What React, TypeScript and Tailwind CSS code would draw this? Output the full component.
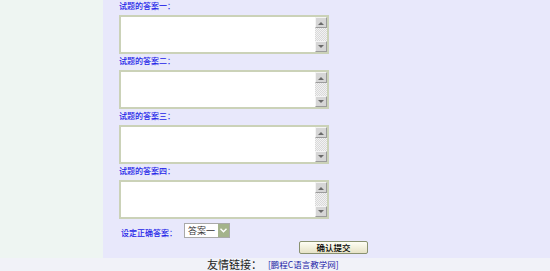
const answers = ["试题的答案一：", "试题的答案二：", "试题的答案三：", "试题的答案四："];

function ScrollButton({ dir }: { dir: "up" | "down" }) {
  return (
    <div className="h-[11px] w-[12px] flex items-center justify-center bg-[#d6d6d6] border border-t-[#f4f4f4] border-l-[#f4f4f4] border-r-[#9c9c9c] border-b-[#9c9c9c]">
      <svg width="6" height="4" viewBox="0 0 6 4">
        {dir === "up" ? (
          <path d="M0 4 L3 1 L6 4 Z" fill="#6a6a6a" />
        ) : (
          <path d="M0 0 L6 0 L3 3 Z" fill="#6a6a6a" />
        )}
      </svg>
    </div>
  );
}

function AnswerBox({ label }: { label: string }) {
  return (
    <div className="flex flex-col mb-[1px]">
      <div className="h-[11px] leading-[11px] text-[8px] font-medium text-[#2424e8]">{label}</div>
      <div className="mt-[4px] h-[39px] w-[210px] flex border-2 border-[#cbd2b8] bg-white">
        <textarea className="flex-1 resize-none outline-none bg-white text-[9px]" />
        <div className="w-[12px] flex flex-col justify-between bg-[repeating-conic-gradient(#d9d9d9_0_25%,#f2f2f2_0_50%)] bg-[length:2px_2px]">
          <ScrollButton dir="up" />
          <ScrollButton dir="down" />
        </div>
      </div>
    </div>
  );
}

export default function App() {
  return (
    <div
      className="w-[550px] h-[271px] overflow-hidden flex flex-col bg-[#f1f2f8]"
      style={{ fontFamily: '"Noto Sans CJK SC", "Liberation Sans", sans-serif' }}
    >
      <div className="flex h-[258px]">
        <div className="w-[103px] bg-[#eef5f2]" />
        <div className="flex-1 bg-[#e8e8fb] pl-[16px] flex flex-col">
          {answers.map((a) => (
            <AnswerBox key={a} label={a} />
          ))}

          <div className="mt-[3px] flex items-center h-[15px]">
            <span className="ml-[2px] text-[8px] font-medium leading-[11px] text-[#2424e8] mt-[3px]">设定正确答案：</span>
            <div className="ml-[7px] h-[15px] w-[46px] flex items-center bg-white border border-[#a9a9a9]">
              <span className="flex-1 pl-[3px] text-[9px] leading-[13px] text-[#333]">答案一</span>
              <div className="w-[11px] h-[13px] bg-[#a4b38b] flex items-center justify-center">
                <svg width="7" height="5" viewBox="0 0 7 5">
                  <path d="M0.5 0.8 L3.5 3.8 L6.5 0.8" stroke="#fff" strokeWidth="1.4" fill="none" />
                </svg>
              </div>
            </div>
          </div>

          <div className="mt-[3px] ml-[180px]">
            <button className="w-[69px] h-[13px] flex items-center justify-center rounded-[2px] border border-[#8a9270] bg-gradient-to-b from-[#fefef4] to-[#e6e2c6] text-[8.5px] font-medium leading-[11px] text-black">
              确认提交
            </button>
          </div>
        </div>
      </div>

      <div className="flex-1 flex items-center pl-[207px]">
        <span className="text-[11px] leading-[13px] text-[#222]">友情链接：</span>
        <span className="ml-[6px] text-[8.5px] leading-[11px] text-[#1c1ca8]">[鹏程C语言教学网]</span>
      </div>
    </div>
  );
}
